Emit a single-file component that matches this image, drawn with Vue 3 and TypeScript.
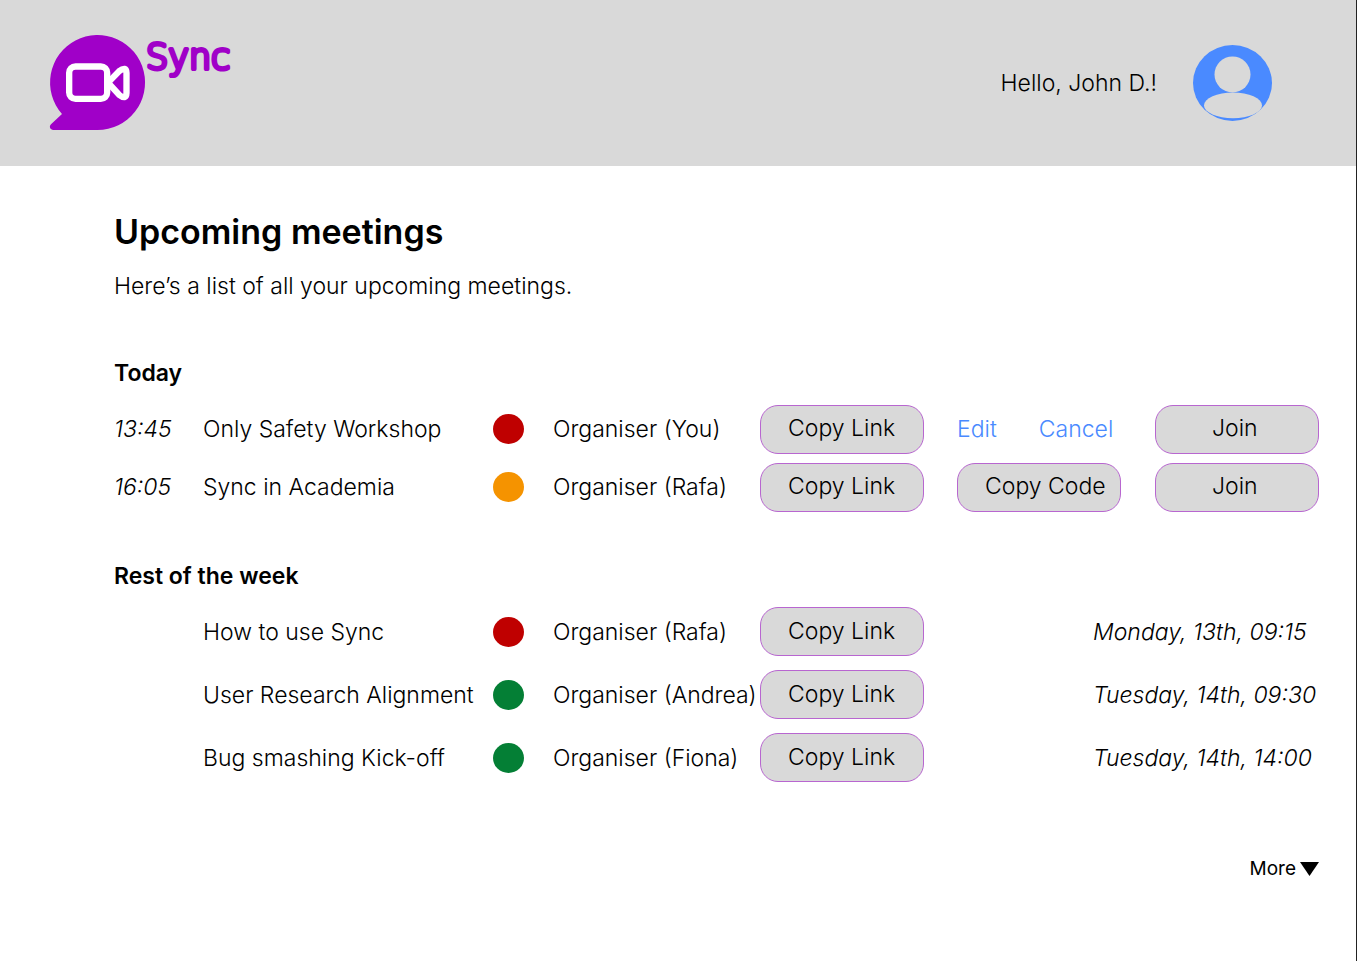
<script setup lang="ts">
type Status = 'busy' | 'pending' | 'free'

interface Meeting {
  title: string
  status: Status
  organiser: string
  time?: string
  date?: string
  own?: boolean
}

const today: Meeting[] = [
  { time: '13:45', title: 'Only Safety Workshop', status: 'busy', organiser: 'You', own: true },
  { time: '16:05', title: 'Sync in Academia', status: 'pending', organiser: 'Rafa' },
]

const week: Meeting[] = [
  { title: 'How to use Sync', status: 'busy', organiser: 'Rafa', date: 'Monday, 13th, 09:15' },
  { title: 'User Research Alignment', status: 'free', organiser: 'Andrea', date: 'Tuesday, 14th, 09:30' },
  { title: 'Bug smashing Kick-off', status: 'free', organiser: 'Fiona', date: 'Tuesday, 14th, 14:00' },
]
</script>

<template>
  <div class="page">
    <header class="topbar">
      <a class="brand" href="#">
        <svg class="brand-mark" viewBox="0 0 285 285" aria-hidden="true">
          <path
            d="M36 237A142.500 142.500 0 1 1 142.500 285H10C1 285 -4 275 3 268Z"
            fill="#a000c8"
          />
          <g fill="none" stroke="#fff" stroke-width="19" stroke-linejoin="round">
            <rect x="57.500" y="94.500" width="114" height="97" rx="19" />
            <path d="M174 143L207 109Q229 92 229.500 114V174Q229 196 207 179Z" />
          </g>
        </svg>
        <svg class="brand-name" viewBox="0 0 90 48">
          <text x="1" y="34">Sync</text>
        </svg>
      </a>
      <div class="account">
        <span>Hello, John D.!</span>
        <svg class="avatar" viewBox="0 0 79 76" aria-hidden="true">
          <ellipse cx="39.500" cy="38" rx="39.500" ry="38" fill="#4a8aff" />
          <circle cx="39.500" cy="29.400" r="18" fill="#d9d9d9" />
          <ellipse cx="40" cy="60.400" rx="29" ry="12.800" fill="#d9d9d9" />
        </svg>
      </div>
    </header>

    <main class="content">
      <h1>Upcoming meetings</h1>
      <p class="intro">Here’s a list of all your upcoming meetings.</p>

      <section>
        <h2 id="today">Today</h2>
        <table class="meetings" aria-labelledby="today">
          <colgroup>
            <col class="c-time" /><col class="c-title" /><col class="c-status" />
            <col class="c-organiser" /><col class="c-action" /><col class="c-action" /><col />
          </colgroup>
          <tbody>
            <tr v-for="m in today" :key="m.title">
              <td class="when">{{ m.time }}</td>
              <td>{{ m.title }}</td>
              <td><span class="dot" :class="m.status"></span></td>
              <td>Organiser ({{ m.organiser }})</td>
              <td><button type="button" class="btn">Copy Link</button></td>
              <td>
                <div v-if="m.own" class="links">
                  <a href="#">Edit</a>
                  <a href="#">Cancel</a>
                </div>
                <button v-else type="button" class="btn">Copy Code</button>
              </td>
              <td class="end"><button type="button" class="btn join">Join</button></td>
            </tr>
          </tbody>
        </table>
      </section>

      <section class="week">
        <h2 id="week">Rest of the week</h2>
        <table class="meetings" aria-labelledby="week">
          <colgroup>
            <col class="c-time" /><col class="c-title" /><col class="c-status" />
            <col class="c-organiser" /><col class="c-action" /><col />
          </colgroup>
          <tbody>
            <tr v-for="m in week" :key="m.title">
              <td></td>
              <td>{{ m.title }}</td>
              <td><span class="dot" :class="m.status"></span></td>
              <td>Organiser ({{ m.organiser }})</td>
              <td><button type="button" class="btn">Copy Link</button></td>
              <td class="when end"><span class="date">{{ m.date }}</span></td>
            </tr>
          </tbody>
        </table>
      </section>

      <button type="button" class="more">
        More
        <svg class="caret" viewBox="0 0 19 14" aria-hidden="true"><path d="M0 0H19L9.500 14Z" /></svg>
      </button>
    </main>
  </div>
</template>

<style>
body {
  margin: 0;
  background: #fff;
}
</style>

<style scoped>
.page {
  box-sizing: border-box;
  min-height: 100vh;
  border-right: 1px solid #222;
  background: #fff;
  color: #000;
  font: 300 23px/28px Inter, 'Liberation Sans', sans-serif;
}

.topbar {
  display: flex;
  justify-content: space-between;
  align-items: center;
  box-sizing: border-box;
  padding: 35px 84px 36px 50px;
  background: #d9d9d9;
}

.brand {
  display: flex;
  align-items: flex-start;
  color: #a000c8;
  text-decoration: none;
}

.brand-mark {
  width: 95px;
  height: 95px;
  overflow: visible;
}

.brand-name {
  width: 90px;
  height: 48px;
  overflow: visible;
  fill: #a000c8;
  stroke: #a000c8;
  stroke-width: 4px;
  stroke-linejoin: round;
  font-family: 'DejaVu Sans', sans-serif;
  font-size: 35px;
  font-weight: 200;
}

.account {
  display: flex;
  align-items: center;
  gap: 36px;
}

.avatar {
  width: 79px;
  height: 76px;
}

.content {
  display: flex;
  flex-direction: column;
  padding: 46px 37px 40px 114px;
}

h1 {
  margin: 0;
  font-size: 34px;
  line-height: 40px;
  font-weight: 600;
}

.intro {
  margin: 20px 0 0;
}

section {
  margin-top: 59px;
}

.week {
  margin-top: 46px;
}

h2 {
  margin: 0 0 13px;
  font-size: 23px;
  line-height: 28px;
  font-weight: 600;
}

.week h2 {
  margin-bottom: 10px;
}

.meetings {
  width: 100%;
  table-layout: fixed;
  border-collapse: collapse;
}

.c-time { width: 89px; }
.c-title { width: 290px; }
.c-status { width: 60px; }
.c-organiser { width: 207px; }
.c-action { width: 197px; }

td {
  height: 58px;
  padding: 0;
  white-space: nowrap;
  vertical-align: middle;
}

.week td {
  height: 63px;
}

.end {
  text-align: right;
}

.when {
  font-style: italic;
}

.date {
  display: inline-block;
  width: 226px;
  text-align: left;
}

.dot {
  display: block;
  width: 31px;
  height: 30px;
  border-radius: 50%;
}

.busy { background: #bf0000; }
.pending { background: #f59300; }
.free { background: #047f35; }

.btn {
  display: inline-block;
  box-sizing: border-box;
  width: 164px;
  height: 49px;
  padding: 0 0 2px 27px;
  border: 1px solid #b866d0;
  border-radius: 18px;
  background: #d9d9d9;
  color: #000;
  font: inherit;
  text-align: left;
  vertical-align: middle;
  cursor: pointer;
}

.join {
  padding-left: 56px;
}

.links {
  display: flex;
  gap: 42px;
}

.links a {
  color: #4a8aff;
  text-decoration: none;
}

.more {
  display: flex;
  align-items: center;
  align-self: flex-end;
  gap: 4px;
  margin-top: 66px;
  padding: 0;
  border: 0;
  background: none;
  color: #000;
  font: inherit;
  font-size: 19px;
  font-weight: 400;
  cursor: pointer;
}

.caret {
  width: 19px;
  height: 14px;
}
</style>
